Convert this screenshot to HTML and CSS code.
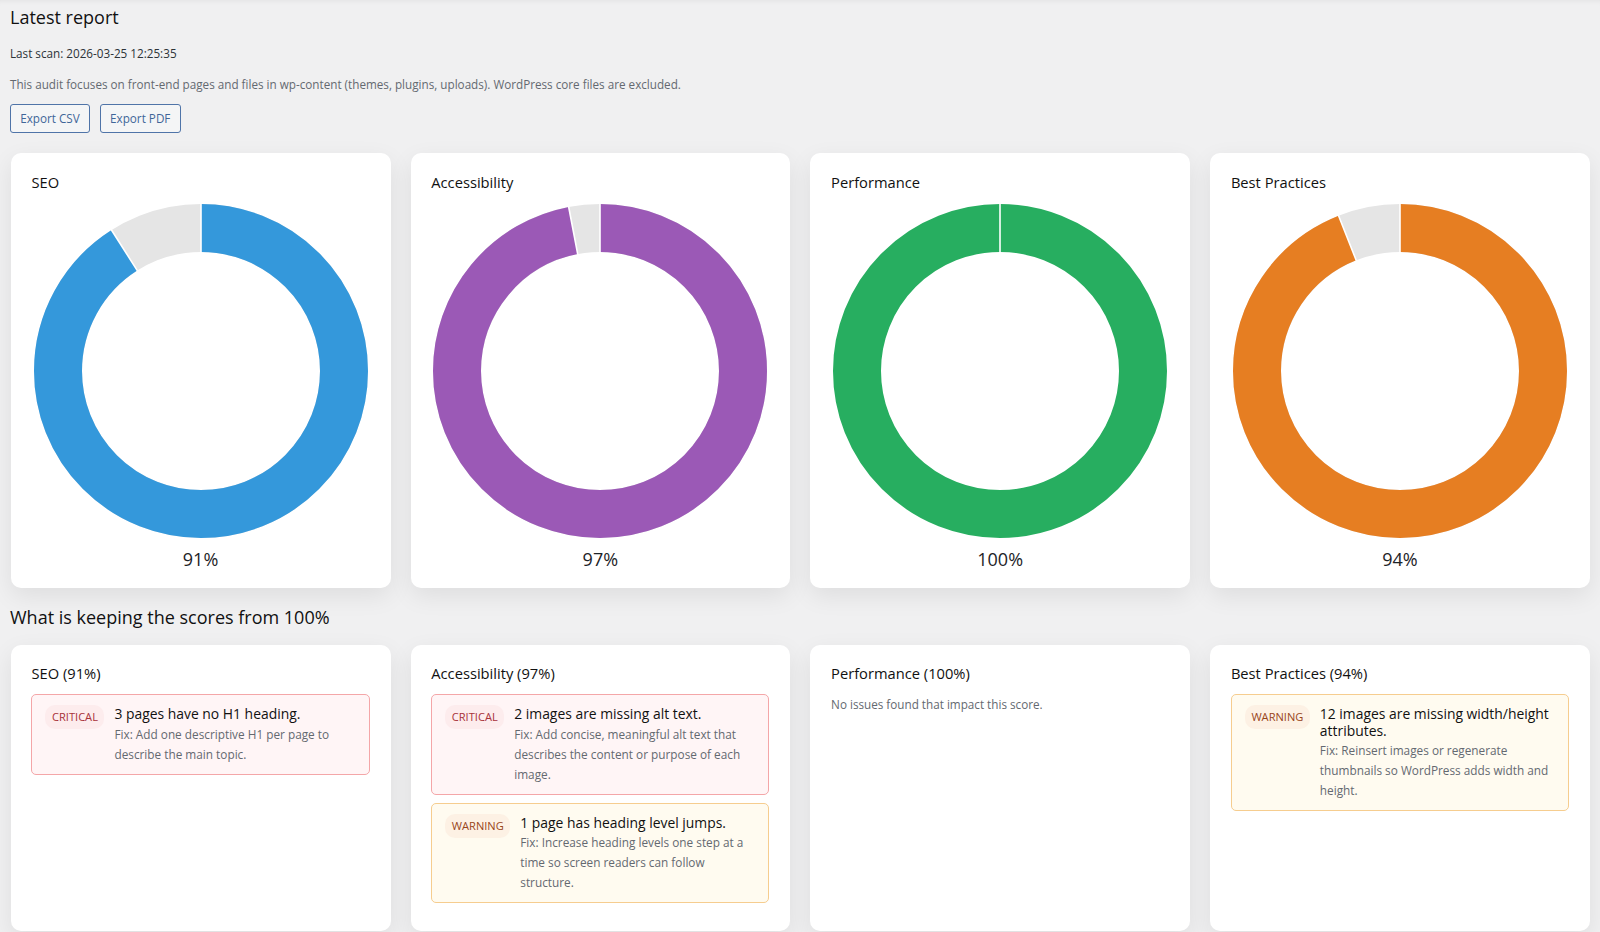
FILE: index.html
```html
<!DOCTYPE html>
<html lang="en">
<head>
<meta charset="utf-8">
<title>Latest report</title>
<link rel="stylesheet" href="styles.css">
</head>
<body>
<main class="page">
  <h2 class="title">Latest report</h2>
  <p class="scan">Last scan: 2026-03-25 12:25:35</p>
  <p class="note">This audit focuses on front-end pages and files in wp-content (themes, plugins, uploads). WordPress core files are excluded.</p>
  <div class="actions">
    <a class="btn">Export CSV</a>
    <a class="btn">Export PDF</a>
  </div>

  <section class="grid charts">
    <article class="card chart-card">
      <h3 class="card-title">SEO</h3>
      <svg class="donut" viewBox="0 0 334 334" width="334" height="334">
        <circle class="track" cx="167" cy="167" r="143" pathLength="100"/>
        <circle class="arc arc-seo" cx="167" cy="167" r="143" pathLength="100" stroke-dasharray="91 9" transform="rotate(-90 167 167)"/>
        <path class="sep" d="M167 0V50M77 25.2L103.8 67.4"/>
      </svg>
      <div class="score">91%</div>
    </article>
    <article class="card chart-card">
      <h3 class="card-title">Accessibility</h3>
      <svg class="donut" viewBox="0 0 334 334" width="334" height="334">
        <circle class="track" cx="167" cy="167" r="143" pathLength="100"/>
        <circle class="arc arc-a11y" cx="167" cy="167" r="143" pathLength="100" stroke-dasharray="97 3" transform="rotate(-90 167 167)"/>
        <path class="sep" d="M167 0V50M135.5 2L144.9 51.1"/>
      </svg>
      <div class="score">97%</div>
    </article>
    <article class="card chart-card">
      <h3 class="card-title">Performance</h3>
      <svg class="donut" viewBox="0 0 334 334" width="334" height="334">
        <circle class="arc arc-perf" cx="167" cy="167" r="143"/>
        <path class="sep" d="M167 0V50"/>
      </svg>
      <div class="score">100%</div>
    </article>
    <article class="card chart-card">
      <h3 class="card-title">Best Practices</h3>
      <svg class="donut" viewBox="0 0 334 334" width="334" height="334">
        <circle class="track" cx="167" cy="167" r="143" pathLength="100"/>
        <circle class="arc arc-best" cx="167" cy="167" r="143" pathLength="100" stroke-dasharray="94 6" transform="rotate(-90 167 167)"/>
        <path class="sep" d="M167 0V50M105.2 10.8L123.6 57.3"/>
      </svg>
      <div class="score">94%</div>
    </article>
  </section>

  <h2 class="subtitle">What is keeping the scores from 100%</h2>

  <section class="grid details">
    <article class="card detail-card">
      <h3 class="card-title">SEO (91%)</h3>
      <div class="issue critical">
        <span class="badge">Critical</span>
        <div class="issue-body">
          <div class="issue-head">3 pages have no H1 heading.</div>
          <div class="issue-fix">Fix: Add one descriptive H1 per page to describe the main topic.</div>
        </div>
      </div>
    </article>
    <article class="card detail-card">
      <h3 class="card-title">Accessibility (97%)</h3>
      <div class="issue critical">
        <span class="badge">Critical</span>
        <div class="issue-body">
          <div class="issue-head">2 images are missing alt text.</div>
          <div class="issue-fix">Fix: Add concise, meaningful alt text that describes the content or purpose of each image.</div>
        </div>
      </div>
      <div class="issue warning">
        <span class="badge">Warning</span>
        <div class="issue-body">
          <div class="issue-head">1 page has heading level jumps.</div>
          <div class="issue-fix">Fix: Increase heading levels one step at a time so screen readers can follow structure.</div>
        </div>
      </div>
    </article>
    <article class="card detail-card">
      <h3 class="card-title">Performance (100%)</h3>
      <p class="none">No issues found that impact this score.</p>
    </article>
    <article class="card detail-card">
      <h3 class="card-title">Best Practices (94%)</h3>
      <div class="issue warning">
        <span class="badge">Warning</span>
        <div class="issue-body">
          <div class="issue-head">12 images are missing width/height attributes.</div>
          <div class="issue-fix">Fix: Reinsert images or regenerate thumbnails so WordPress adds width and height.</div>
        </div>
      </div>
    </article>
  </section>
</main>
</body>
</html>
```

FILE: styles.css
```css
* { box-sizing: border-box; }
html, body { margin: 0; height: 100%; overflow: hidden; }
body {
  background: #f0f0f1;
  color: #1d2327;
  font-family: "Open Sans", "Liberation Sans", sans-serif;
}
.page {
  height: 932px;
  padding: 6px 10px 0;
  box-shadow: inset 0 6px 6px -6px rgba(0, 0, 0, .08);
}
.title { margin: 0; font-size: 18px; line-height: 23px; font-weight: 500; color: #111; }
.scan { margin: 15px 0 0; font-size: 11.7px; line-height: 18px; color: #2c3338; }
.note { margin: 13px 0 0; font-size: 11.7px; line-height: 18px; color: #646970; }
.actions { display: flex; gap: 10px; margin-top: 11px; }
.btn {
  display: block;
  height: 29px;
  padding: 0 9.2px;
  border: 1px solid #4f74a8;
  border-radius: 3px;
  background: #f4f5f6;
  color: #3f6699;
  font-size: 11.7px;
  line-height: 27px;
}
.grid { display: grid; grid-template-columns: repeat(4, 1fr); gap: 20px; margin-left: .8px; }
.charts { margin-top: 20px; }
.card {
  background: #fff;
  border-radius: 10px;
  box-shadow: 0 8px 24px rgba(0, 0, 0, .08);
  padding: 21px 21px 21px 20.7px;
}
.card-title { margin: 0; font-size: 14.7px; line-height: 18px; font-weight: 500; color: #111; }
.chart-card { height: 435px; padding-top: 20px; }
.donut { display: block; margin: 13px auto 0; }
.track, .arc { fill: none; stroke-width: 48; }
.track { stroke: #e5e5e5; }
.arc-seo { stroke: #3498db; }
.arc-a11y { stroke: #9b59b6; }
.arc-perf { stroke: #27ae60; }
.arc-best { stroke: #e67e22; }
.sep { fill: none; stroke: #fff; stroke-width: 1.6; }
.score { margin-top: 9px; text-align: center; font-size: 18px; line-height: 24px; color: #1d2327; }
.subtitle { margin: 17px 0 0; font-size: 18px; line-height: 24px; font-weight: 500; color: #111; }
.details { margin-top: 16px; }
.detail-card { height: 286px; padding-top: 19px; }
.issue {
  display: flex;
  gap: 10px;
  align-items: flex-start;
  margin-top: 12px;
  padding: 10px 12px 10px 13px;
  border: 1px solid;
  border-radius: 5px;
}
.issue + .issue { margin-top: 8px; }
.critical { background: #fff5f6; border-color: #f4a6a8; }
.warning { background: #fffbf0; border-color: #f6cd8f; }
.badge {
  flex: none;
  padding: 4px 6.5px;
  border-radius: 10px;
  font-size: 11.1px;
  line-height: 16px;
  text-transform: uppercase;
}
.critical .badge { background: #fdeced; color: #a8323a; }
.warning .badge { background: #fdf1e4; color: #99451a; }
.issue-head { font-size: 13.9px; line-height: 17px; font-weight: 500; color: #111; }
.issue-fix { margin-top: 2px; font-size: 11.8px; line-height: 20px; color: #646970; }
.warning .issue-fix { margin-top: 1px; }
.none { margin: 13px 0 0; font-size: 11.7px; line-height: 18px; color: #646970; }
```
